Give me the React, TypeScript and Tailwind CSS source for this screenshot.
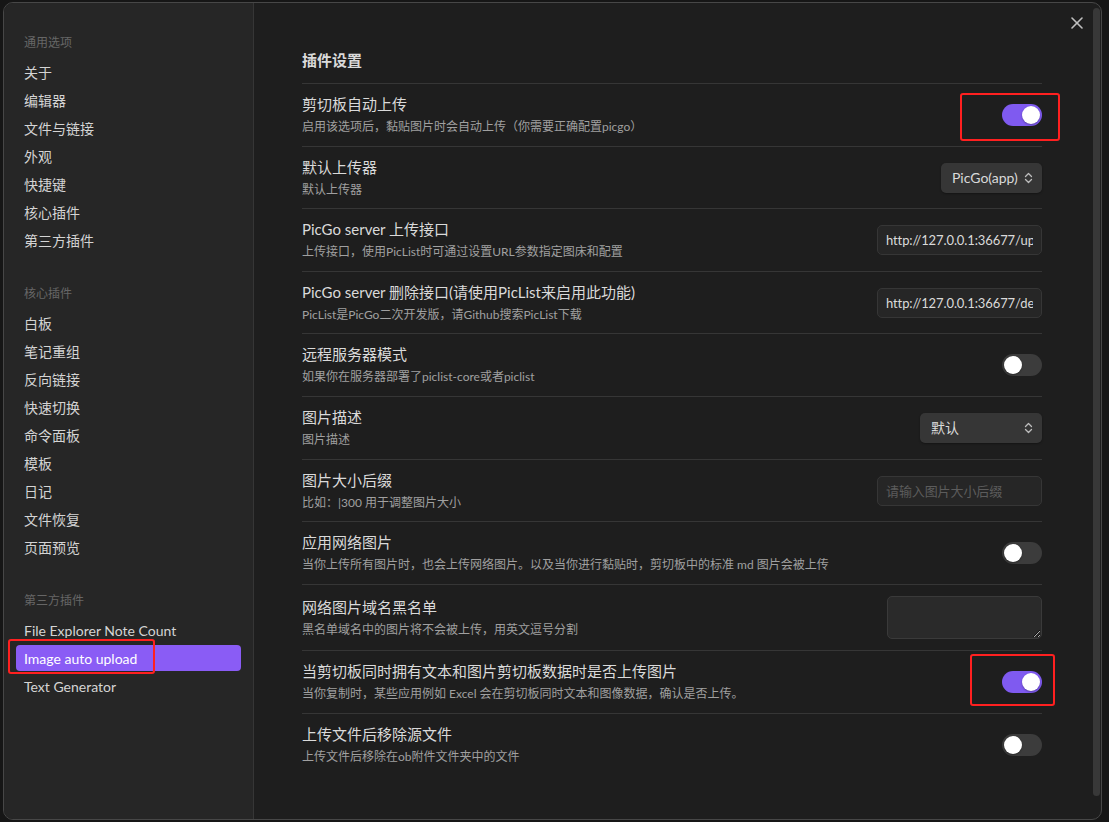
import type { ReactNode } from 'react';

const generalItems = ['关于', '编辑器', '文件与链接', '外观', '快捷键', '核心插件', '第三方插件'];
const coreItems = ['白板', '笔记重组', '反向链接', '快速切换', '命令面板', '模板', '日记', '文件恢复', '页面预览'];
const communityItems = ['File Explorer Note Count', 'Image auto upload', 'Text Generator'];

const ACTIVE = 'Image auto upload';

function NavSection({ title, items, first }: { title: string; items: string[]; first?: boolean }) {
  return (
    <div className={first ? '' : 'mt-[31px]'}>
      <div className="h-[18px] px-2 text-[12px] leading-[18px] text-[#666]">{title}</div>
      <div className="mt-[6px]">
        {items.map(item => (
          <div key={item} className="relative py-[1px]">
            <div
              className={`h-[26px] px-2 flex items-center rounded-[4px] text-[14px] ${
                item === ACTIVE ? 'bg-[#8a5cf5] text-white' : 'text-[#d4d4d4]'
              }`}
            >
              {item}
            </div>
            {item === ACTIVE && (
              <div className="absolute -left-[8px] -top-[5px] w-[147px] h-[35px] border-[2.5px] border-[#ff2020] rounded-[3px] pointer-events-none" />
            )}
          </div>
        ))}
      </div>
    </div>
  );
}

function Toggle({ on }: { on?: boolean }) {
  return (
    <div
      className={`w-[40px] h-[22px] rounded-full p-[2px] flex ${
        on ? 'bg-[#7f5af0] justify-end' : 'bg-[#3c3c3c] justify-start'
      }`}
    >
      <div className="w-[18px] h-[18px] rounded-full bg-white shadow-[0_1px_2px_rgba(0,0,0,0.3)]" />
    </div>
  );
}

// Toggle with the red annotation frame drawn round it
function MarkedToggle({ frame }: { frame: string }) {
  return (
    <div className="relative">
      <Toggle on />
      <div className={`absolute border-[2.5px] border-[#ff2020] rounded-[3px] pointer-events-none ${frame}`} />
    </div>
  );
}

function Chevrons() {
  return (
    <svg width="9" height="12" viewBox="0 0 9 12" fill="none" stroke="#bdbdbd" strokeWidth="1.3" strokeLinecap="round" strokeLinejoin="round">
      <path d="M1.5 4.5 L4.5 1.5 L7.5 4.5" />
      <path d="M1.5 7.5 L4.5 10.5 L7.5 7.5" />
    </svg>
  );
}

function Dropdown({ value, width }: { value: string; width: string }) {
  return (
    <div
      className={`${width} h-[30px] bg-[#363636] rounded-[5px] pl-[11px] pr-[9px] flex items-center justify-between text-[14px] text-[#dadada] shadow-[0_1px_2px_rgba(0,0,0,0.35)]`}
    >
      <span>{value}</span>
      <Chevrons />
    </div>
  );
}

function TextInput({ value, placeholder }: { value?: string; placeholder?: string }) {
  return (
    <input
      readOnly
      value={value ?? ''}
      placeholder={placeholder}
      className="w-[165px] h-[30px] bg-[#262626] border border-[#363636] rounded-[5px] px-[8px] text-[13px] tracking-[-0.1px] text-[#dadada] placeholder:text-[#5c5c5c] outline-none font-['Lato','Noto_Sans_CJK_SC',sans-serif]"
    />
  );
}

function Row({ title, desc, children }: { title: string; desc: string; children: ReactNode }) {
  return (
    <div className="border-t border-[#363636] pt-[10px] pb-[9.6px] flex items-center gap-4">
      <div className="flex-1 min-w-0">
        <div className="text-[15px] leading-[20px] text-[#dadada]">{title}</div>
        <div className="mt-[4px] text-[12px] leading-[18px] text-[#a0a0a0]">{desc}</div>
      </div>
      <div className="flex-none">{children}</div>
    </div>
  );
}

export default function App() {
  return (
    <div className="w-full h-screen bg-[#161616] pt-[2px] pl-[3px] overflow-hidden font-['Lato','Noto_Sans_CJK_SC',sans-serif] scheme-dark">
      <div className="relative w-[1099px] h-[818px] rounded-[10px] border border-[#474747] bg-[#1e1e1e] flex overflow-hidden">
        {/* Left nav */}
        <aside className="w-[250px] flex-none bg-[#262626] border-r border-[#363636] px-3 pt-[31px]">
          <NavSection title="通用选项" items={generalItems} first />
          <NavSection title="核心插件" items={coreItems} />
          <NavSection title="第三方插件" items={communityItems} />
        </aside>

        {/* Settings pane */}
        <main className="flex-1 flex min-w-0">
          <div className="flex-1 min-w-0 pl-[48px] pr-[51px] pt-[47px]">
            <div className="text-[15px] font-bold leading-[20px] text-[#dadada] mb-[13px]">插件设置</div>

            <Row title="剪切板自动上传" desc="启用该选项后，黏贴图片时会自动上传（你需要正确配置picgo）">
              <MarkedToggle frame="-left-[42px] -right-[18px] -top-[11px] -bottom-[15px]" />
            </Row>
            <Row title="默认上传器" desc="默认上传器">
              <Dropdown value="PicGo(app)" width="w-[101px]" />
            </Row>
            <Row title="PicGo server 上传接口" desc="上传接口，使用PicList时可通过设置URL参数指定图床和配置">
              <TextInput value="http://127.0.0.1:36677/upload" />
            </Row>
            <Row title="PicGo server 删除接口(请使用PicList来启用此功能)" desc="PicList是PicGo二次开发版，请Github搜索PicList下载">
              <TextInput value="http://127.0.0.1:36677/delete" />
            </Row>
            <Row title="远程服务器模式" desc="如果你在服务器部署了piclist-core或者piclist">
              <Toggle />
            </Row>
            <Row title="图片描述" desc="图片描述">
              <Dropdown value="默认" width="w-[122px]" />
            </Row>
            <Row title="图片大小后缀" desc="比如：|300 用于调整图片大小">
              <TextInput placeholder="请输入图片大小后缀" />
            </Row>
            <Row title="应用网络图片" desc="当你上传所有图片时，也会上传网络图片。以及当你进行黏贴时，剪切板中的标准 md 图片会被上传">
              <Toggle />
            </Row>
            <Row title="网络图片域名黑名单" desc="黑名单域名中的图片将不会被上传，用英文逗号分割">
              <textarea
                readOnly
                className="block w-[155px] h-[43px] my-[1.5px] bg-[#2a2a2a] border border-[#3a3a3a] rounded-[5px] outline-none"
              />
            </Row>
            <Row title="当剪切板同时拥有文本和图片剪切板数据时是否上传图片" desc="当你复制时，某些应用例如 Excel 会在剪切板同时文本和图像数据，确认是否上传。">
              <MarkedToggle frame="-left-[32px] -right-[13px] -top-[17px] -bottom-[13px]" />
            </Row>
            <Row title="上传文件后移除源文件" desc="上传文件后移除在ob附件文件夹中的文件">
              <Toggle />
            </Row>
          </div>

          {/* Scrollbar thumb */}
          <div className="w-[7px] flex-none mr-[1px] mt-[5px] mb-[23px] rounded-full bg-[#383838]" />
        </main>

        {/* Close button */}
        <button className="absolute top-[8px] right-[12px] w-6 h-6 flex items-center justify-center">
          <svg width="12" height="12" viewBox="0 0 12 12" stroke="#bfbfbf" strokeWidth="1.6" strokeLinecap="round">
            <path d="M1 1 L11 11" />
            <path d="M11 1 L1 11" />
          </svg>
        </button>
      </div>
    </div>
  );
}
